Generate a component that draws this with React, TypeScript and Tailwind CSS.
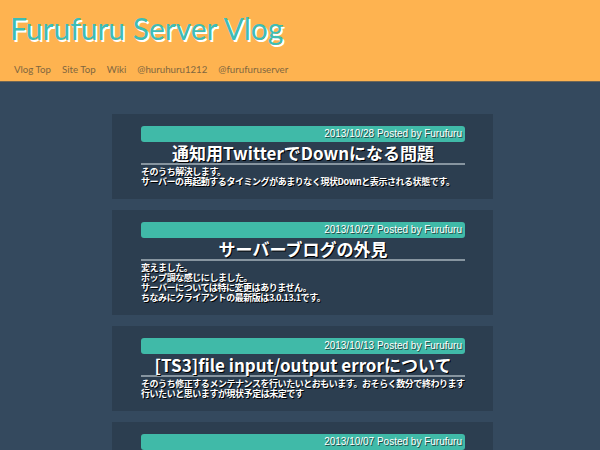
const posts = [
  {
    date: "2013/10/28 Posted by Furufuru",
    title: "通知用TwitterでDownになる問題",
    lines: ["そのうち解決します。", "サーバーの再起動するタイミングがあまりなく現状Downと表示される状態です。"],
  },
  {
    date: "2013/10/27 Posted by Furufuru",
    title: "サーバーブログの外見",
    lines: [
      "変えました。",
      "ポップ調な感じにしました。",
      "サーバーについては特に変更はありません。",
      "ちなみにクライアントの最新版は3.0.13.1です。",
    ],
  },
  {
    date: "2013/10/13 Posted by Furufuru",
    title: "[TS3]file input/output errorについて",
    lines: [
      "そのうち修正するメンテナンスを行いたいとおもいます。おそらく数分で終わります",
      "行いたいと思いますが現状予定は未定です",
    ],
  },
  {
    date: "2013/10/07 Posted by Furufuru",
    title: "サーバー移転のお知らせ",
    lines: ["近日中に移転します。", "詳細は追ってお知らせします。"],
  },
];

const navItems = ["Vlog Top", "Site Top", "Wiki", "@huruhuru1212", "@furufuruserver"];

export default function App() {
  return (
    <div className="min-h-screen bg-[#34495e] font-['Noto_Sans_CJK_JP',sans-serif]">
      <header className="h-[82px] border-b border-[#6f6656] bg-[#feb350] px-[10px]">
        <h1 className="pt-[10px] font-['Lato',sans-serif] text-[30px] leading-[37px] text-[#3dbdb6] [text-shadow:2px_2px_0_#ffffff]">
          Furufuru Server Vlog
        </h1>
        <nav className="mt-[15px] flex gap-[11px] pl-[4px] font-['Lato',sans-serif] text-[9.7px] leading-[14px] text-[#7f6740]">
          {navItems.map((item) => (
            <span key={item}>{item}</span>
          ))}
        </nav>
      </header>

      <main className="flex flex-col gap-[11px] pb-8 pl-[112px] pt-[32px]">
        {posts.map((post) => (
          <article key={post.date} className="w-[381px] bg-[#2c3e50] pb-[12px] pl-[29px] pr-[28px] pt-[12px]">
            <div className="h-[16px] rounded-[3px] bg-[#40baa8] pr-[3px] text-right font-['Liberation_Sans',sans-serif] text-[10px] leading-[16px] text-white [text-shadow:1px_1px_0_#1f4a44]">
              {post.date}
            </div>
            <h2 className="border-b-2 border-[#8795a0] text-center text-[17px] font-bold leading-[21px] text-white [text-shadow:1px_1px_0_#000000]">
              {post.title}
            </h2>
            <div className="mt-[2px] whitespace-nowrap text-[9px] font-bold leading-[10px] tracking-[-0.45px] text-white [text-shadow:1px_1px_0_#000000]">
              {post.lines.map((line) => (
                <p key={line}>{line}</p>
              ))}
            </div>
          </article>
        ))}
      </main>
    </div>
  );
}
